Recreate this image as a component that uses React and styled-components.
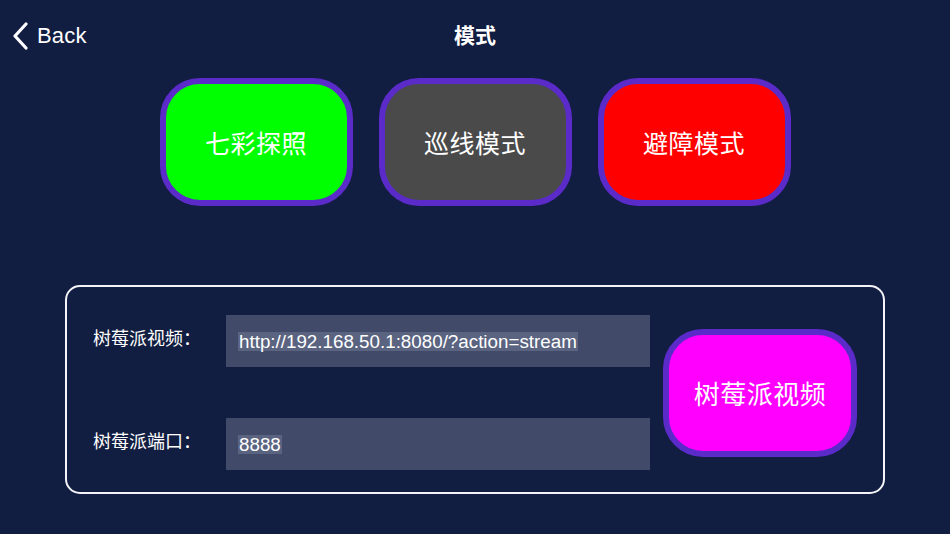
import React from "react";
import styled, { createGlobalStyle } from "styled-components";

const Global = createGlobalStyle`
  html, body { margin: 0; padding: 0; background: #111d41; }
  body { font-family: "Liberation Sans", "Noto Sans CJK SC", sans-serif; }
  #root { width: 950px; height: 534px; overflow: hidden; }
`;

const Page = styled.div`
  width: 950px;
  height: 534px;
  background: #111d41;
  color: #fff;
  display: flex;
  flex-direction: column;
`;

const Header = styled.div`
  height: 70px;
  display: grid;
  grid-template-columns: 1fr auto 1fr;
  align-items: center;
`;

const BackButton = styled.div`
  display: flex;
  align-items: center;
  gap: 8px;
  padding-left: 11px;
  padding-top: 2px;
  font-family: "Liberation Sans", Arial, sans-serif;
  font-size: 22px;
  color: #fff;
  letter-spacing: 0.2px;
`;

const Title = styled.div`
  font-family: "Noto Sans CJK SC", sans-serif;
  font-size: 21px;
  font-weight: 700;
  color: #fff;
  margin-top: -3px;
`;

const ModeRow = styled.div`
  margin-top: 8px;
  display: flex;
  justify-content: center;
  gap: 26px;
`;

const ModeButton = styled.div`
  box-sizing: border-box;
  width: ${(p) => p.$w || 193}px;
  height: 128px;
  border: 6px solid #5b2bc9;
  border-radius: 40px;
  background: ${(p) => p.$bg};
  display: flex;
  align-items: center;
  justify-content: center;
  font-family: "Noto Sans CJK SC", sans-serif;
  font-size: ${(p) => p.$fs || 25}px;
  font-weight: 400;
  color: #fff;
  flex-shrink: 0;
  letter-spacing: 0.5px;
`;

const Panel = styled.div`
  box-sizing: border-box;
  margin: 79px 0 0 65px;
  width: 820px;
  height: 209px;
  border: 2px solid #f4f4f8;
  border-radius: 15px;
  padding: 28px 26px 22px 26px;
  display: flex;
  align-items: center;
  gap: 13px;
`;

const Fields = styled.div`
  display: grid;
  grid-template-columns: 133px 424px;
  row-gap: 51px;
  align-self: flex-start;
`;

const Label = styled.div`
  font-family: "Noto Sans CJK SC", sans-serif;
  font-size: 18px;
  color: #fff;
  align-self: center;
  margin-top: -8px;
`;

const Field = styled.div`
  height: 52px;
  background: #414a68;
  display: flex;
  align-items: center;
  padding-left: 12px;
  padding-top: 1px;
  box-sizing: border-box;
`;

const Selected = styled.span`
  background: #5a6380;
  font-family: "Liberation Sans", Arial, sans-serif;
  font-size: 18.8px;
  line-height: 19px;
  color: #fff;
  padding: 0 1px;
`;

function Chevron() {
  return (
    <svg width="18" height="28" viewBox="0 0 18 28">
      <polyline
        points="15,2 4,14 15,26"
        fill="none"
        stroke="#fff"
        strokeWidth="3.2"
        strokeLinecap="round"
        strokeLinejoin="round"
      />
    </svg>
  );
}

export default function App() {
  return (
    <Page>
      <Global />
      <Header>
        <BackButton>
          <Chevron />
          <span>Back</span>
        </BackButton>
        <Title>模式</Title>
        <div />
      </Header>
      <ModeRow>
        <ModeButton $bg="#00ff00">七彩探照</ModeButton>
        <ModeButton $bg="#4a4a4a">巡线模式</ModeButton>
        <ModeButton $bg="#ff0000">避障模式</ModeButton>
      </ModeRow>
      <Panel>
        <Fields>
          <Label>树莓派视频：</Label>
          <Field>
            <Selected>http://192.168.50.1:8080/?action=stream</Selected>
          </Field>
          <Label>树莓派端口：</Label>
          <Field>
            <Selected>8888</Selected>
          </Field>
        </Fields>
        <ModeButton $bg="#ff00ff" $w={194} $fs={26}>
          树莓派视频
        </ModeButton>
      </Panel>
    </Page>
  );
}
